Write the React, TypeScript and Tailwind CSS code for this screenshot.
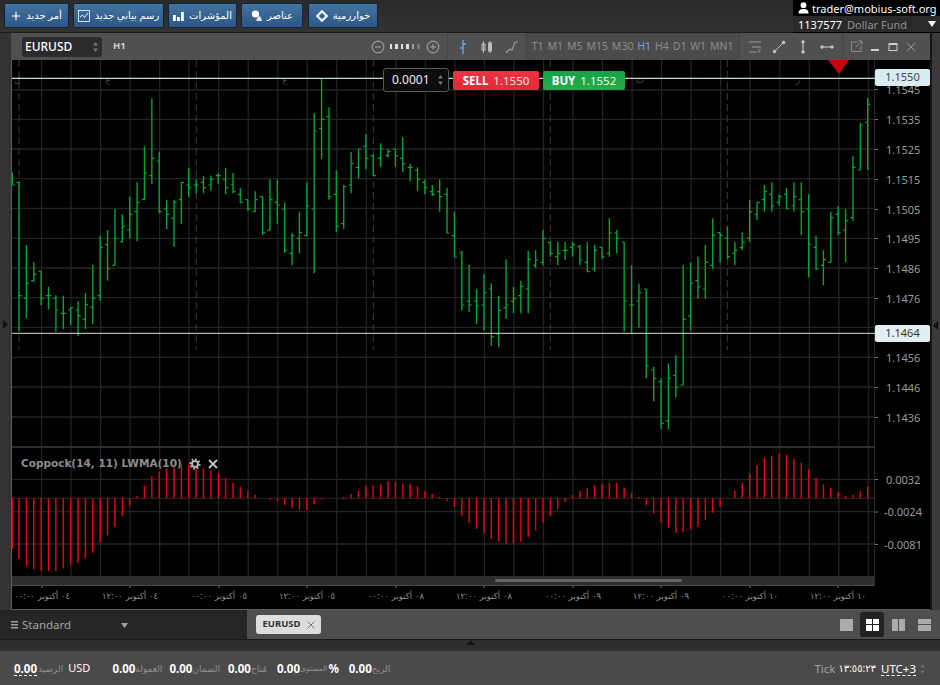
import React from "react";

// [high, low, open tick, close tick], read off at 3x, y = 60 + v / 3
const bars = [
  [365, 815, 367, 707], [555, 775, 715, 670], [607, 665, 662, 643], [633, 735, 634, 715], [680, 748, 707, 707],
  [705, 815, 715, 750], [707, 807, 760, 760], [742, 795, 750, 743], [723, 828, 750, 767], [698, 807, 778, 734],
  [615, 793, 742, 715], [527, 722, 707, 562], [510, 662, 554, 626], [447, 617, 616, 535], [463, 548, 546, 499],
  [410, 535, 510, 463], [367, 544, 455, 427], [259, 420, 418, 339], [115, 372, 347, 295], [275, 459, 303, 455],
  [420, 508, 447, 463], [420, 560, 475, 427], [367, 491, 419, 367], [323, 411, 375, 383], [358, 400, 375, 375],
  [347, 400, 367, 383], [347, 392, 375, 358], [340, 372, 347, 347], [323, 403, 358, 383], [339, 400, 375, 395],
  [384, 428, 403, 427], [419, 452, 419, 447], [394, 455, 455, 419], [410, 526, 410, 518], [358, 511, 511, 419],
  [358, 491, 427, 435], [427, 580, 447, 571], [519, 616, 580, 527], [455, 580, 535, 518], [367, 527, 527, 438],
  [160, 640, 447, 213], [55, 296, 205, 178], [142, 419, 170, 410], [331, 516, 403, 499], [376, 507, 491, 380],
  [275, 400, 375, 311], [267, 356, 322, 267], [223, 328, 259, 295], [283, 347, 287, 347], [250, 320, 295, 267],
  [267, 292, 287, 275], [267, 320, 267, 287], [232, 336, 295, 311], [311, 364, 322, 322], [322, 392, 331, 358],
  [358, 403, 367, 383], [375, 408, 395, 403], [358, 455, 395, 410], [383, 520, 403, 519], [455, 591, 527, 591],
  [572, 751, 579, 735], [615, 757, 724, 735], [688, 793, 723, 738], [643, 811, 735, 698], [670, 857, 687, 830],
  [707, 862, 822, 751], [598, 776, 743, 735], [680, 760, 724, 716], [662, 760, 707, 679], [572, 760, 687, 598],
  [571, 624, 616, 600], [510, 616, 607, 535], [545, 590, 547, 580], [546, 616, 590, 580], [546, 600, 571, 571],
  [546, 590, 562, 554], [554, 616, 560, 600], [546, 635, 607, 635], [554, 635, 627, 571], [562, 596, 562, 590],
  [475, 590, 580, 519], [510, 580, 519, 535], [546, 815, 546, 723], [616, 820, 735, 735], [671, 803, 723, 698],
  [687, 955, 687, 918], [920, 1024, 930, 955], [955, 1108, 965, 1090], [910, 1108, 1082, 955], [886, 1012, 946, 982],
  [616, 975, 975, 778], [607, 812, 768, 670], [590, 716, 662, 680], [555, 716, 687, 607], [475, 627, 616, 526],
  [518, 608, 518, 526], [500, 598, 534, 590], [546, 616, 580, 571], [518, 571, 563, 546], [420, 545, 535, 455],
  [427, 480, 463, 427], [375, 455, 419, 394], [367, 455, 403, 438], [403, 437, 427, 410], [384, 447, 403, 447],
  [367, 455, 438, 410], [367, 526, 419, 455], [403, 652, 447, 553], [527, 630, 562, 627], [571, 676, 616, 599],
  [455, 607, 607, 473], [438, 526, 463, 518], [447, 607, 510, 482], [287, 482, 473, 322], [188, 330, 330, 195],
  [115, 330, 187, 133],
];

const coppock = [
  -182, -202, -213, -219, -218, -218, -210, -199, -193, -180, -163, -133, -111, -86, -53, -22, 7, 38, 67, 80,
  90, 95, 102, 100, 90, 90, 83, 75, 61, 46, 35, 22, 10, 0, -5, -8, -20, -28, -33, -35,
  -17, -3, 0, 1, 4, 13, 22, 37, 40, 44, 52, 50, 44, 44, 36, 22, 13, 4, -8, -27,
  -52, -75, -92, -105, -122, -130, -136, -136, -130, -115, -97, -75, -52, -33, -10, 10, 22, 30, 40, 44,
  46, 46, 32, 17, 3, -21, -45, -74, -88, -104, -102, -93, -86, -65, -43, -26, 0, 22, 47, 75,
  100, 121, 128, 135, 130, 119, 106, 88, 62, 42, 30, 18, 8, 10, 22, 35,
];

const barX = (k: number) => 19 + 7.38 * k;
const toY = (v: number) => 60 + v / 3;

const priceLabels = [
  ["1.1545", 90], ["1.1535", 120], ["1.1525", 150], ["1.1515", 180], ["1.1505", 210], ["1.1495", 239],
  ["1.1486", 269], ["1.1476", 299], ["1.1456", 358], ["1.1446", 388], ["1.1436", 418],
] as const;

const gridY = [90, 119.3, 149, 178.7, 208.3, 238.3, 268, 297.7, 327.3, 357.3, 387, 417];
const subGridY = [479.3, 498.3, 511.7, 544];
const gridX = Array.from({ length: 29 }, (_, i) => 41.5 + 29.53 * i);
const dashedX = [19, 196.3, 373.3, 550.3, 727.3];

const timeLabels = [
  [42, "٠٤ أكتوبر ٠٠:٠٠"], [130, "٠٤ أكتوبر ١٢:٠٠"], [219, "٠٥ أكتوبر ٠٠:٠٠"], [307, "٠٥ أكتوبر ١٢:٠٠"],
  [396, "٠٨ أكتوبر ٠٠:٠٠"], [484, "٠٨ أكتوبر ١٢:٠٠"], [573, "٠٩ أكتوبر ٠٠:٠٠"], [661, "٠٩ أكتوبر ١٢:٠٠"],
  [750, "١٠ أكتوبر ٠٠:٠٠"], [838, "١٠ أكتوبر ١٢:٠٠"],
] as const;

const dayMarks = [[17, "ل"], [108, "ع"], [285, "ع"], [640, "ت"], [798, "ر"]] as const;

const timeframes = ["T1", "M1", "M5", "M15", "M30", "H1", "H4", "D1", "W1", "MN1"];

function Spinner({ className }: { className: string }) {
  return (
    <svg width="7" height="12" viewBox="0 0 7 12" className={className}>
      <path d="M3.5 1 6 4.5H1z M3.5 11 6 7.5H1z" fill="currentColor" />
    </svg>
  );
}

function TopButton({ icon, label, className }: { icon: React.ReactNode; label: string; className: string }) {
  return (
    <button
      className={`flex h-[25px] items-center justify-center gap-[5px] rounded-[2px] border border-[#12233a] bg-gradient-to-b from-[#44739f] to-[#2e5687] text-[10px] text-white ${className}`}
    >
      {icon}
      <span dir="rtl">{label}</span>
    </button>
  );
}

function Chart() {
  const wick = bars.map((b, i) => `M${barX(i)} ${toY(b[0])}V${toY(b[1])}`).join("");
  const ticks = bars
    .map((b, i) => `M${barX(i) - 2.6} ${toY(b[2])}H${barX(i)}M${barX(i)} ${toY(b[3])}H${barX(i) + 2.6}`)
    .join("");
  return (
    <svg width="919" height="551" viewBox="11 60 919 551" className="block">
      <g stroke="#232323" strokeWidth="1.3">
        {gridY.map((y) => (
          <line key={y} x1="12" x2="874" y1={y} y2={y} />
        ))}
        {subGridY.map((y) => (
          <line key={y} x1="12" x2="874" y1={y} y2={y} />
        ))}
        {gridX.map((x) => (
          <React.Fragment key={x}>
            <line x1={x} x2={x} y1="60" y2="446" />
            <line x1={x} x2={x} y1="448" y2="576" />
          </React.Fragment>
        ))}
      </g>
      <g stroke="#3a3a3a" strokeWidth="1" strokeDasharray="7 4">
        {dashedX.map((x) => (
          <line key={x} x1={x} x2={x} y1="60" y2="350" />
        ))}
      </g>
      <line x1="12" x2="874" y1="447" y2="447" stroke="#3d3d3d" strokeWidth="1.5" />
      <line x1="874.5" x2="874.5" y1="60" y2="586" stroke="#2c2c2c" />

      {dayMarks.map(([x, t]) => (
        <text key={x} x={x} y="83" fontSize="9" fill="#4a4a4a" textAnchor="middle">
          {t}
        </text>
      ))}

      <path d={wick} stroke="#00a52e" strokeWidth="1.4" fill="none" />
      <path d={ticks} stroke="#00a52e" strokeWidth="1.1" fill="none" />
      <path d="M12.4 172.5V185M12.4 185H15" stroke="#00a52e" strokeWidth="1.2" fill="none" />

      <g stroke="#e0000f" strokeWidth="1.5">
        <line x1="12.4" x2="12.4" y1="498.3" y2="549" />
        {coppock.map((v, i) => (
          <line key={i} x1={barX(i)} x2={barX(i)} y1="498.3" y2={498.3 - v / 3} />
        ))}
      </g>

      <line x1="12" x2="875" y1="78.3" y2="78.3" stroke="#c4d6d6" strokeWidth="1.2" />
      <line x1="12" x2="875" y1="333.3" y2="333.3" stroke="#d6e0e0" strokeWidth="1" />

      <g fontSize="11" fill="#9a9a9a" fontFamily="'Noto Sans','DejaVu Sans',sans-serif">
        {priceLabels.map(([t, y]) => (
          <React.Fragment key={t}>
            <line x1="875" x2="878" y1={y - 0.5} y2={y - 0.5} stroke="#777" />
            <text x="886" y={y + 4}>
              {t}
            </text>
          </React.Fragment>
        ))}
        <line x1="875" x2="878" y1="479.5" y2="479.5" stroke="#777" />
        <line x1="875" x2="878" y1="512" y2="512" stroke="#777" />
        <line x1="875" x2="878" y1="544.5" y2="544.5" stroke="#777" />
        <text x="886" y="484">0.0032</text>
        <text x="884" y="516">-0.0024</text>
        <text x="884" y="549">-0.0081</text>
      </g>

      <line x1="12" x2="874" y1="585.5" y2="585.5" stroke="#4a4a4a" />
      <g fontSize="8.5" fill="#8f8f8f" fontFamily="'DejaVu Sans',sans-serif">
        {timeLabels.map(([x, t]) => (
          <React.Fragment key={x}>
            <line x1={x} x2={x} y1="586" y2="588" stroke="#777" />
            <text x={x} y="599" direction="rtl" textAnchor="middle">
              {t}
            </text>
          </React.Fragment>
        ))}
      </g>
      <polygon points="828,60 849,60 839,74" fill="#c9000f" />
    </svg>
  );
}

export default function App() {
  return (
    <div className="flex h-[685px] w-[940px] flex-col overflow-hidden bg-[#2e2e2e] font-['Noto_Sans','DejaVu_Sans',sans-serif] text-white">
      {/* Top toolbar */}
      <div className="flex h-[33px] shrink-0 justify-between bg-gradient-to-b from-[#2a2a2a] to-[#333333] border-b border-[#1c1c1c]">
        <div className="flex gap-[4px] pl-[4px] pt-[3px]">
          <TopButton
            className="w-[65px]"
            label="أمر جديد"
            icon={
              <svg width="10" height="10" viewBox="0 0 10 10">
                <path d="M5 1v8M1 5h8" stroke="#fff" strokeWidth="1.2" />
              </svg>
            }
          />
          <TopButton
            className="w-[91px]"
            label="رسم بياني جديد"
            icon={
              <svg width="12" height="12" viewBox="0 0 12 12" fill="none" stroke="#fff">
                <rect x="0.5" y="0.5" width="11" height="11" strokeWidth="0.8" />
                <path d="M2 7l2.5-2 2 2.5L10 3" strokeWidth="0.9" />
              </svg>
            }
          />
          <TopButton
            className="w-[69px]"
            label="المؤشرات"
            icon={
              <svg width="11" height="10" viewBox="0 0 11 10" fill="#fff">
                <rect x="0" y="4" width="2.8" height="6" />
                <rect x="4" y="6" width="2.8" height="4" />
                <rect x="8" y="1" width="2.8" height="9" />
              </svg>
            }
          />
          <TopButton
            className="w-[62px]"
            label="عناصر"
            icon={
              <svg width="11" height="11" viewBox="0 0 11 11" fill="#fff">
                <circle cx="4.500" cy="4" r="3.6" />
                <path d="M5 11 7 6.5h2.5L11 11z" opacity="0.85" />
              </svg>
            }
          />
          <TopButton
            className="ml-[1px] w-[70px]"
            label="خوارزمية"
            icon={
              <svg width="12" height="12" viewBox="0 0 12 12" fill="none" stroke="#fff" strokeWidth="2">
                <path d="M6 1.2 10.8 6 6 10.8 1.2 6z" />
              </svg>
            }
          />
        </div>
        <div className="flex h-[33px] w-[147px] flex-col bg-black">
          <div className="flex h-[16px] items-center gap-[3px] whitespace-nowrap pl-[5px] text-[11px] leading-none">
            <svg width="11" height="12" viewBox="0 0 11 12" fill="#fff" className="shrink-0">
              <circle cx="5.5" cy="3.2" r="2.9" />
              <path d="M0.5 11.5c0-3 1.5-4 3.5-4.5h3c2 .5 3.5 1.5 3.5 4.5z" />
            </svg>
            trader@mobius-soft.org
          </div>
          <div className="flex h-[16px] items-center whitespace-nowrap bg-[#2a2a2a] pl-[5px] pr-[4px] text-[11px] leading-none">
            <span className="text-white">1137577</span>
            <span className="ml-[5px] flex-1 text-[#8f8f8f]">Dollar Fund</span>
            <svg width="8" height="6" viewBox="0 0 8 6" fill="#fff">
              <path d="M0 0h8L4 6z" />
            </svg>
          </div>
        </div>
      </div>

      {/* Chart window */}
      <div className="flex h-[577px] shrink-0">
        <div className="relative flex w-[11px] items-center bg-[#333333]">
          <svg width="5" height="9" viewBox="0 0 5 9" className="ml-[3px] mt-[6px]" fill="#111">
            <path d="M0 0l5 4.5L0 9z" />
          </svg>
        </div>
        <div className="flex w-[919px] flex-col">
          {/* Chart header */}
          <div className="flex h-[27px] items-center bg-[#505050] text-[#9a9a9a]">
            <div className="ml-[11px] flex h-[20px] w-[80px] items-center justify-between rounded-[3px] bg-[#2b2b2b] pl-[3px] pr-[3px] text-[12px] font-medium text-white">
              EURUSD
              <Spinner className="text-[#777]" />
            </div>
            <span className="ml-[11px] text-[9.5px] font-bold text-[#d0d0d0]">H1</span>
            <div className="ml-[245px] flex items-center">
              <svg width="14" height="14" viewBox="0 0 14 14" fill="none" stroke="#9a9a9a" strokeWidth="1.2">
                <circle cx="7" cy="7" r="5.8" />
                <path d="M4 7h6" />
              </svg>
              <div className="ml-[5px] flex w-[31px] gap-[3px]">
                <i className="h-[5px] w-[2.5px] bg-[#ddd]" />
                <i className="h-[5px] w-[2.5px] bg-[#ddd]" />
                <i className="h-[5px] w-[2.5px] bg-[#ddd]" />
                <i className="h-[5px] w-[2.5px] bg-[#ddd]" />
                <i className="h-[5px] w-[2.5px] bg-[#999]" />
                <i className="h-[5px] w-[2.5px] bg-[#777]" />
              </div>
              <svg width="14" height="14" viewBox="0 0 14 14" fill="none" stroke="#9a9a9a" strokeWidth="1.2" className="ml-[5px]">
                <circle cx="7" cy="7" r="5.8" />
                <path d="M4 7h6M7 4v6" />
              </svg>
            </div>
            <div className="ml-[7px] flex h-full items-center border-l border-[#444] pl-[9px]">
              <svg width="12" height="16" viewBox="0 0 12 16" fill="none" stroke="#6ea6e0" strokeWidth="1.4">
                <path d="M6 1v14M3 9h3M6 5h3" />
              </svg>
              <svg width="14" height="14" viewBox="0 0 14 14" fill="#bdbdbd" stroke="#bdbdbd" className="ml-[11px]">
                <path d="M3.5 1v12M10 1v12" strokeWidth="1" />
                <rect x="2" y="4" width="3" height="6" fill="none" strokeWidth="1" />
                <rect x="8.5" y="3" width="3" height="8" strokeWidth="1" />
              </svg>
              <svg width="14" height="14" viewBox="0 0 14 14" fill="none" stroke="#9a9a9a" strokeWidth="1.2" className="ml-[11px]">
                <path d="M1 13l4-4 2 1 3-8h3" />
              </svg>
            </div>
            <div className="ml-[7px] flex h-full w-[214px] items-center justify-between border-x border-[#444] bg-[#4b4b4b] px-[5px] text-[10.5px] text-[#8c8c8c]">
              {timeframes.map((t) => (
                <span key={t} className={t === "H1" ? "text-[#6ea6e0]" : ""}>
                  {t}
                </span>
              ))}
            </div>
            <div className="flex h-full items-center pl-[8px]">
              <svg width="14" height="14" viewBox="0 0 14 14" fill="none" stroke="#9a9a9a">
                <path d="M1 2h12M4 7h9M1 12h8" />
                <text x="10" y="13" fontSize="6" fill="#9a9a9a" stroke="none">F</text>
              </svg>
              <svg width="14" height="14" viewBox="0 0 14 14" fill="#bdbdbd" stroke="#bdbdbd" className="ml-[10px]">
                <path d="M2.5 11.5l9-9" strokeWidth="1" />
                <circle cx="2.5" cy="11.5" r="1.4" />
                <circle cx="11.5" cy="2.5" r="1.4" />
              </svg>
              <svg width="14" height="14" viewBox="0 0 14 14" fill="#bdbdbd" stroke="#bdbdbd" className="ml-[10px]">
                <path d="M7 2v10" strokeWidth="1.2" />
                <circle cx="7" cy="2" r="1.3" />
                <circle cx="7" cy="12" r="1.3" />
              </svg>
              <svg width="14" height="14" viewBox="0 0 14 14" fill="#bdbdbd" stroke="#bdbdbd" className="ml-[10px]">
                <path d="M2 7h10" strokeWidth="1.2" />
                <circle cx="2" cy="7" r="1.3" />
                <circle cx="12" cy="7" r="1.3" />
              </svg>
            </div>
            <div className="ml-[8px] flex h-full items-center border-l border-[#444] pl-[7px]">
              <svg width="13" height="13" viewBox="0 0 13 13" fill="none" stroke="#8a8a8a">
                <path d="M7 2H1.5v9.5H11V6M6 7l6-6M8 1h4v4" />
              </svg>
              <svg width="10" height="10" viewBox="0 0 10 10" fill="#cfcfcf" className="ml-[7px]">
                <rect x="1" y="7" width="8" height="2" />
              </svg>
              <svg width="10" height="10" viewBox="0 0 10 10" fill="none" stroke="#cfcfcf" className="ml-[8px]">
                <rect x="1" y="1.5" width="8" height="7" />
                <path d="M1 2h8" strokeWidth="2" />
              </svg>
              <svg width="10" height="10" viewBox="0 0 10 10" fill="none" stroke="#999" className="ml-[8px]">
                <path d="M1 1l8 8M9 1l-8 8" />
              </svg>
            </div>
          </div>

          {/* Chart body */}
          <div className="relative h-[550px] overflow-hidden border-l border-[#5a5a5a] bg-black">
            <div className="-ml-[1px]">
              <Chart />
            </div>

            <div className="absolute left-[371px] top-[8px] flex h-[24px] w-[66px] items-center justify-between rounded-[3px] border border-[#5a5a5a] bg-[#0c0c0c] pl-[8px] pr-[4px] text-[12px] text-[#eeeeee]">
              0.0001
              <Spinner className="text-[#777]" />
            </div>
            <div className="absolute left-[441px] top-[11px] flex h-[19px] w-[86px] items-center justify-center gap-[5px] rounded-[2px] bg-gradient-to-b from-[#ed3340] to-[#e02a38] text-[11.5px]">
              <b>SELL</b>
              <span className="text-[#ffe5e5]">1.1550</span>
            </div>
            <div className="absolute left-[531px] top-[11px] flex h-[19px] w-[82px] items-center justify-center gap-[5px] rounded-[2px] bg-gradient-to-b from-[#12a34a] to-[#2aa845] text-[11.5px]">
              <b>BUY</b>
              <span className="text-[#e6ffe9]">1.1552</span>
            </div>

            <div className="absolute left-[863px] top-[9px] flex h-[17px] w-[55px] items-center justify-center rounded-[2px] bg-[#d9ecf1] text-[11px] text-[#444]">
              1.1550
            </div>
            <div className="absolute left-[863px] top-[265px] flex h-[17px] w-[55px] items-center justify-center rounded-[2px] bg-[#e1eff3] text-[11px] text-[#333]">
              1.1464
            </div>

            <div className="absolute left-[9px] top-[396px] flex items-center gap-[7px] whitespace-nowrap font-['DejaVu_Sans',sans-serif] text-[10.5px] font-bold text-[#8d8d8d]">
              Coppock(14, 11) LWMA(10)
              <svg width="12" height="12" viewBox="0 0 12 12" fill="none" stroke="#b5b5b5">
                <circle cx="6" cy="6" r="3" strokeWidth="2" />
                <circle cx="6" cy="6" r="4.8" strokeWidth="1.6" strokeDasharray="1.8 1.9" />
              </svg>
              <svg width="10" height="10" viewBox="0 0 10 10" stroke="#c5c5c5" strokeWidth="1.8">
                <path d="M1 1l8 8M9 1l-8 8" />
              </svg>
            </div>

            <div className="absolute left-0 top-[516px] h-[9px] w-[862px] bg-[#2e2e2e]">
              <div className="ml-[483px] mt-[3px] h-[3px] w-[187px] rounded-full bg-[#666]" />
            </div>
            <div className="absolute bottom-0 left-0 h-px w-full bg-[#5a5a5a]" />
          </div>
        </div>
        <div className="flex w-[10px] items-center border-l-2 border-[#161616] bg-[#3a3a3a]">
          <svg width="5" height="9" viewBox="0 0 5 9" className="ml-[1px] mt-[8px]" fill="#111">
            <path d="M5 0L0 4.500l5 4.500z" />
          </svg>
        </div>
      </div>

      {/* Tabs row */}
      <div className="flex h-[30px] shrink-0 border-b border-[#1a1a1a]">
        <div className="flex w-[247px] items-center bg-[#262626] pl-[11px] pt-[1px] text-[11.5px] text-[#a5a5a5]">
          <svg width="7" height="8" viewBox="0 0 7 8" fill="#a0a0a0">
            <path d="M0 0h7v1.500H0zM0 3h7v1.500H0zM0 6h7v1.500H0z" />
          </svg>
          <span className="ml-[4px] w-[99px]">Standard</span>
          <svg width="7" height="5" viewBox="0 0 7 5" fill="#a0a0a0">
            <path d="M0 0h7L3.500 5z" />
          </svg>
        </div>
        <div className="flex flex-1 items-center bg-[#4e4e4e] pl-[9px] pr-[3px]">
          <div className="flex h-[19px] w-[65px] items-center justify-center gap-[6px] rounded-[3px] bg-[#dddddd] text-[9.5px] font-bold text-[#333]">
            EURUSD
            <svg width="8" height="8" viewBox="0 0 8 8" stroke="#777" strokeWidth="1">
              <path d="M0.500 0.500l7 7M7.500 0.500l-7 7" />
            </svg>
          </div>
          <div className="ml-auto flex items-center gap-[1px]">
            <div className="flex h-[25px] w-[25px] items-center justify-center">
              <div className="h-[12px] w-[13px] bg-[#ababab]" />
            </div>
            <div className="flex h-[25px] w-[24px] items-center justify-center rounded-[3px] bg-[#222]">
              <div className="grid h-[12px] w-[13px] grid-cols-2 gap-[1px]">
                <i className="bg-white" />
                <i className="bg-white" />
                <i className="bg-white" />
                <i className="bg-white" />
              </div>
            </div>
            <div className="flex h-[25px] w-[26px] items-center justify-center">
              <div className="grid h-[12px] w-[13px] grid-cols-2 gap-[1px]">
                <i className="bg-[#ababab]" />
                <i className="bg-[#ababab]" />
              </div>
            </div>
            <div className="flex h-[25px] w-[25px] items-center justify-center">
              <div className="grid h-[12px] w-[13px] grid-rows-2 gap-[1px]">
                <i className="bg-[#ababab]" />
                <i className="bg-[#ababab]" />
              </div>
            </div>
          </div>
        </div>
      </div>

      {/* Collapse strip */}
      <div className="flex h-[11px] shrink-0 items-start justify-center bg-[#2e2e2e]">
        <svg width="9" height="5" viewBox="0 0 9 5" fill="#111">
          <path d="M0 5l4.500-5L9 5z" />
        </svg>
      </div>

      {/* Status bar */}
      <div className="flex flex-1 items-center bg-[#4a4a4a] pl-[14px] pr-[14px] pt-[1px] text-[11.5px]">
        <b className="border-b border-dashed border-white leading-[13px]">0.00</b>
        <span className="ml-[1px] text-[9px] text-[#909090]" dir="rtl">الرصيد</span>
        <span className="ml-[5px] text-[11px]">USD</span>
        <b className="ml-[22px]">0.00</b>
        <span className="text-[9px] text-[#909090]" dir="rtl">العمولة</span>
        <b className="ml-[7px]">0.00</b>
        <span className="text-[9px] text-[#909090]" dir="rtl">الضمان</span>
        <b className="ml-[8px]">0.00</b>
        <span className="text-[9px] text-[#909090]" dir="rtl">مُتاح</span>
        <b className="ml-[10px]">0.00</b>
        <span className="text-[7.5px] text-[#909090]" dir="rtl">المستوى</span>
        <b className="ml-[1px]">%</b>
        <b className="ml-[10px]">0.00</b>
        <span className="text-[9px] text-[#909090]" dir="rtl">الربح</span>
        <span className="ml-auto text-[#a0a0a0]">Tick</span>
        <span className="ml-[3px] text-[10px] text-white" dir="rtl">١٣:٥٥:٢٣</span>
        <span className="ml-[5px] border-b border-dashed border-white leading-[13px]">UTC+3</span>
        <Spinner className="ml-[3px] text-[#6a6a6a]" />
      </div>
    </div>
  );
}
